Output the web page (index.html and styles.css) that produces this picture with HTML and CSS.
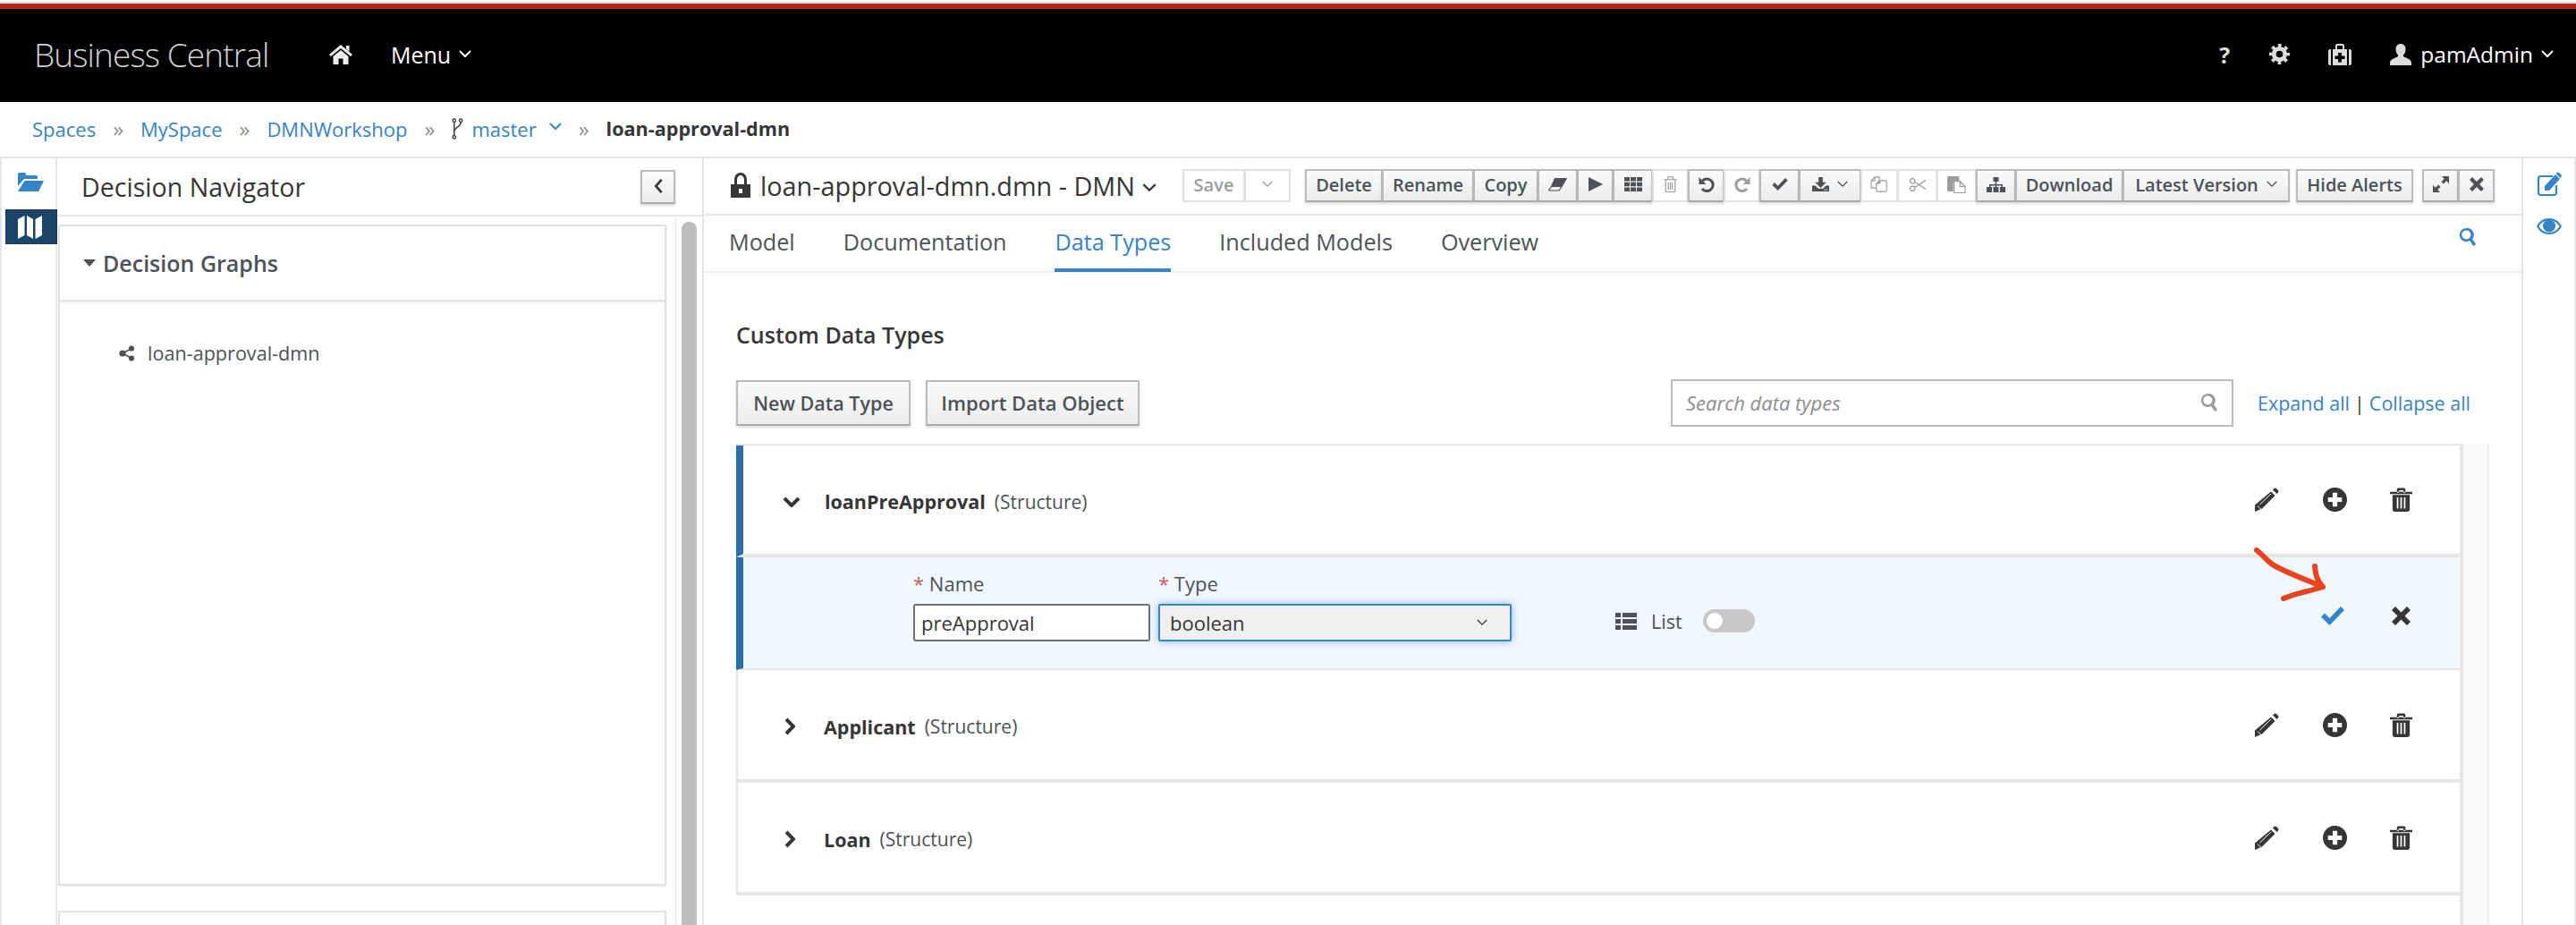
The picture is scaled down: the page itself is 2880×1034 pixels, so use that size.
FILE: index.html
```html
<!DOCTYPE html>
<html>
  <head>
    <title>Business Central</title>
    <link rel="stylesheet" href="styles.css">
  </head>
  <body>
    <svg class="sprites" width="0" height="0">
      <symbol id="i-home" viewBox="0 0 26 22"><path d="M13 0 26 11l-2 2L13 4 2 13l-2-2zM19 1h3.500v6.500L19 4.500zM4.500 13 13 6l8.500 7v9H15.500v-6.500h-5V22h-6z"/></symbol>
      <symbol id="i-gear" viewBox="0 0 24 24"><circle cx="12" cy="12" r="6.500" fill="none" stroke="currentColor" stroke-width="5"/><circle cx="12" cy="12" r="10" fill="none" stroke="currentColor" stroke-width="4" stroke-dasharray="3.900 3.950" stroke-dashoffset="2"/></symbol>
      <symbol id="i-medkit" viewBox="0 0 26 24"><path d="M8 6V2q0-2 2-2h6q2 0 2 2v4h-2V2h-6v4zM0 8q0-2 2-2h1v18H2q-2 0-2-2zM26 8q0-2-2-2h-1v18h1q2 0 2-2zM5 6h16v18H5zM11 10v3.500H7.500v3.500H11v3.500h4V17h3.500v-3.500H15V10z" fill-rule="evenodd"/></symbol>
      <symbol id="i-user" viewBox="0 0 24 24"><path d="M12 0c3.500 0 5.500 2.500 5.500 6 0 2.500-1 5-2.500 6.500v1.500c2.500 2 9 2.500 9 7.500V24H0v-2.500c0-5 6.500-5.500 9-7.500v-1.500C7.500 11 6.500 8.500 6.500 6c0-3.500 2-6 5.500-6z"/></symbol>
      <symbol id="i-folder" viewBox="0 0 29 21"><path d="M0 2q0-2 2-2h5q2 0 2 2v1h11q2 0 2 2v2H7L0 15zM7.500 9H29l-6 12H0z"/></symbol>
      <symbol id="i-map" viewBox="0 0 27 26"><path d="M0 4 7.500 0v22L0 26zM10 0l7 4v22l-7-4zM19.500 4 27 0v22l-7.500 4z"/></symbol>
      <symbol id="i-branch" viewBox="0 0 14 26"><g fill="none" stroke="currentColor" stroke-width="1.600"><circle cx="3" cy="3" r="1.800"/><circle cx="3" cy="23" r="1.800"/><circle cx="11" cy="3" r="1.800"/><path d="M3 5v16M11 5c0 7-8 5-8 12"/></g></symbol>
      <symbol id="i-share" viewBox="0 0 18 18"><circle cx="4" cy="9" r="3.600"/><circle cx="14" cy="3.500" r="3.100"/><circle cx="14" cy="14.500" r="3.100"/><path d="M4 9 14 3.500M4 9l10 5.500" stroke="currentColor" stroke-width="1.500"/></symbol>
      <symbol id="i-lock" viewBox="0 0 22 28"><path d="M4 13V8c0-5 3-8 7-8s7 3 7 8v5h-3V8c0-3-2-5-4-5S7 5 7 8v5zM0 13h22v15H0zM9 18v5h4v-5z" fill-rule="evenodd"/></symbol>
      <symbol id="i-eraser" viewBox="0 0 21 15"><path d="M7 0h13q1.200 0 .7 1L16 9H3z"/><path d="M3.500 9.500H15L12 14H1.500q-1 0-.6-1z" fill="none" stroke="currentColor" stroke-width="1.200"/></symbol>
      <symbol id="i-play" viewBox="0 0 16 16"><path d="M0 0 16 8 0 16z"/></symbol>
      <symbol id="i-grid" viewBox="0 0 20 16"><path d="M0 0h6v4.500H0zM7 0h6v4.500H7zM14 0h6v4.500h-6zM0 5.750h6v4.500H0zM7 5.750h6v4.500H7zM14 5.750h6v4.500h-6zM0 11.500h6V16H0zM7 11.500h6V16H7zM14 11.500h6V16h-6z"/></symbol>
      <symbol id="i-trash" viewBox="0 0 26 28"><path d="M0 5h26v2.500H0zM8 6V2.500Q8 .500 10 .500h6q2 0 2 2V6h-2.500V3h-5v3zM3 8.500h20v17q0 2.500-2.500 2.500h-15Q3 28 3 25.500zM8 11.500v13h1.800v-13zM12.100 11.500v13h1.800v-13zM16.200 11.500v13H18v-13z" fill-rule="evenodd"/></symbol>
      <symbol id="i-trash-o" viewBox="0 0 20 24"><g fill="none" stroke="currentColor" stroke-width="1.600"><path d="M0 5h20M6 5V2q0-1 1-1h6q1 0 1 1v3M3 5v17q0 1.500 1.500 1.500h11Q17 23.500 17 22V5M7 9v11M10 9v11M13 9v11"/></g></symbol>
      <symbol id="i-undo" viewBox="0 0 18 18"><path d="M4.500 5A6.800 6.800 0 1 1 4 14" fill="none" stroke="currentColor" stroke-width="3"/><path d="M.5 1v8h8z"/></symbol>
      <symbol id="i-check" viewBox="0 0 26 21"><path d="M0 11.500 4 7.500l5.500 5.500L22 0l4 4L9.500 21z"/></symbol>
      <symbol id="i-download" viewBox="0 0 24 20"><path d="M9 0h6v7h5l-8 8-8-8h5zM0 12h4.500l4 4h7l4-4H24v8H0z"/><path d="M17 17h1.500v1.500H17zM20 17h1.500v1.500H20z" fill="#f3f3f3"/></symbol>
      <symbol id="i-files" viewBox="0 0 24 22"><g fill="none" stroke="currentColor" stroke-width="1.400"><path d="M1 6l5-5h6v5l-4 4v6H1zM6 1v5H1M8 10l5-4h8q1 0 1 1v13q0 1-1 1H9q-1 0-1-1zM13 6v4H8"/></g></symbol>
      <symbol id="i-scissors" viewBox="0 0 24 18"><g fill="none" stroke="currentColor" stroke-width="1.500"><circle cx="5" cy="4" r="3.200"/><circle cx="5" cy="14" r="3.200"/><path d="M8 5.500 23 15M8 12.500 23 3"/></g></symbol>
      <symbol id="i-paste" viewBox="0 0 22 20"><path d="M0 2q0-2 2-2h10q2 0 2 2v4H9q-2 0-2 2v10H2q-2 0-2-2z"/><path d="M8 6h7l6 6v7.500H8zM15 6v6h6" fill="#fff" stroke="currentColor" stroke-width="1.300"/></symbol>
      <symbol id="i-sitemap" viewBox="0 0 21 17"><path d="M7.500 0h6v5h-6zM9.750 5h1.500v3H18v3h-1.500V9.500h-5.250V11h-1.500V9.500H4.500V11H3V8h6.750zM0 11h6v6H0zM7.500 11h6v6h-6zM15 11h6v6h-6z"/></symbol>
      <symbol id="i-expand" viewBox="0 0 22 22"><path d="M12 0h10v10l-3.500-3.500-4 4-3-3 4-4zM10 22H0V12l3.500 3.500 4-4 3 3-4 4z"/></symbol>
      <symbol id="i-times" viewBox="0 0 21 21"><path d="M4 0l6.500 6.500L17 0l4 4-6.500 6.500L21 17l-4 4-6.500-6.500L4 21l-4-4 6.500-6.500L0 4z"/></symbol>
      <symbol id="i-search" viewBox="0 0 22 24"><path d="M9 0a9 9 0 1 0 4.500 16.800L18.500 24l3.500-2.500-5-6.800A9 9 0 0 0 9 0zm0 3a6 6 0 1 1 0 12A6 6 0 0 1 9 3z"/></symbol>
      <symbol id="i-edit" viewBox="0 0 28 28"><path d="M22 15v8q0 3-3 3H5q-3 0-3-3V8q0-3 3-3h13" fill="none" stroke="currentColor" stroke-width="2.200"/><path d="M21 3l5 5-12 13H9v-5zM23 1q1-1 2 0l2.500 2.500q1 1 0 2L26.500 7l-5-5z"/></symbol>
      <symbol id="i-eye" viewBox="0 0 28 18"><path d="M14 0C8 0 3 3 0 9c3 6 8 9 14 9s11-3 14-9c-3-6-8-9-14-9zm0 2c5 0 9 3 11.500 7C23 13 19 16 14 16S5 13 2.500 9C5 5 9 2 14 2z"/><circle cx="14" cy="8.500" r="7"/></symbol>
      <symbol id="i-plus" viewBox="0 0 26 26"><path fill-rule="evenodd" d="M13 0a13 13 0 1 0 0 26 13 13 0 0 0 0-26zM10.500 5.500h5v5h5v5h-5v5h-5v-5h-5v-5h5z"/></symbol>
      <symbol id="i-pencil" viewBox="0 0 27 27"><path d="M18 4.500l4.500 4.500L8 23.500 0 27v-7.500zM20 2.500l1.500-1.500q1.200-1 2.500 0l2 2q1 1.300 0 2.500L24.500 7z"/><path d="M5.500 19 18 7M3 20.500l3.500 3.500" stroke="#fff" stroke-width="1" fill="none"/></symbol>
      <symbol id="i-list" viewBox="0 0 24 19"><path d="M0 .5q0-.5.5-.5H6v5H0zM8 0h16v5H8zM0 7h6v5H0zM8 7h16v5H8zM0 14h6v5H.5q-.5 0-.5-.5zM8 14h16v5H8z"/></symbol>
    </svg>

    <div class="topline"></div>
    <nav class="navbar">
      <span class="brand">Business Central</span>
      <svg class="ico home"><use href="#i-home"/></svg>
      <a class="nav-menu">Menu <svg class="caret" viewBox="0 0 14 9"><path d="M1 1l6 6 6-6"/></svg></a>
      <div class="nav-right">
        <span class="help">?</span>
        <svg class="ico gear"><use href="#i-gear"/></svg>
        <svg class="ico medkit"><use href="#i-medkit"/></svg>
        <svg class="ico user"><use href="#i-user"/></svg>
        <a class="nav-user">pamAdmin <svg class="caret" viewBox="0 0 14 9"><path d="M1 1l6 6 6-6"/></svg></a>
      </div>
    </nav>

    <div class="crumbs">
      <a>Spaces</a><span class="sep">»</span>
      <a>MySpace</a><span class="sep">»</span>
      <a>DMNWorkshop</a><span class="sep">»</span>
      <svg class="ico branch"><use href="#i-branch"/></svg>
      <a>master</a>
      <svg class="caret blue" viewBox="0 0 14 9"><path d="M1 1l6 6 6-6"/></svg>
      <span class="sep">»</span>
      <b>loan-approval-dmn</b>
    </div>

    <div class="workspace">
      <aside class="rail">
        <svg class="ico folder"><use href="#i-folder"/></svg>
        <div class="rail-active"><svg class="ico map"><use href="#i-map"/></svg></div>
      </aside>

      <section class="navigator">
        <header class="nav-head">
          <h2>Decision Navigator</h2>
          <button class="btn collapse"><svg viewBox="0 0 12 20"><path d="M10 2 3 10l7 8"/></svg></button>
        </header>
        <div class="nav-scroll">
          <div class="nav-cards">
            <div class="card graphs">
              <div class="card-head"><i class="tri"></i>Decision Graphs</div>
              <div class="graph-item"><svg class="ico share"><use href="#i-share"/></svg>loan-approval-dmn</div>
            </div>
            <div class="card second"></div>
          </div>
          <div class="scroll-track"><div class="scroll-thumb"></div></div>
        </div>
      </section>

      <main class="editor">
        <div class="toolbar">
          <svg class="ico lock"><use href="#i-lock"/></svg>
          <span class="title">loan-approval-dmn.dmn - DMN</span>
          <svg class="caret dark" viewBox="0 0 14 9"><path d="M1 1l6 6 6-6"/></svg>

          <div class="group off save-group">
            <button class="btn w70">Save</button>
            <button class="btn w52"><svg class="caret small" viewBox="0 0 14 9"><path d="M1 1l6 6 6-6"/></svg></button>
          </div>
          <div class="group main-group">
            <button class="btn w86">Delete</button>
            <button class="btn w102">Rename</button>
            <button class="btn w72">Copy</button>
            <button class="btn w44"><svg class="t-eraser"><use href="#i-eraser"/></svg></button>
            <button class="btn w40"><svg class="t-play"><use href="#i-play"/></svg></button>
            <button class="btn w44"><svg class="t-grid"><use href="#i-grid"/></svg></button>
            <button class="btn w40 off"><svg class="t-trash"><use href="#i-trash-o"/></svg></button>
            <button class="btn w40"><svg class="t-undo"><use href="#i-undo"/></svg></button>
            <button class="btn w40 off"><svg class="t-undo flip"><use href="#i-undo"/></svg></button>
            <button class="btn w44"><svg class="t-check"><use href="#i-check"/></svg></button>
            <button class="btn w70"><svg class="t-download"><use href="#i-download"/></svg><svg class="caret small" viewBox="0 0 14 9"><path d="M1 1l6 6 6-6"/></svg></button>
            <button class="btn w42 off"><svg class="t-files"><use href="#i-files"/></svg></button>
            <button class="btn w44 off"><svg class="t-scissors"><use href="#i-scissors"/></svg></button>
            <button class="btn w44 off"><svg class="t-paste"><use href="#i-paste"/></svg></button>
            <button class="btn w44"><svg class="t-sitemap"><use href="#i-sitemap"/></svg></button>
            <button class="btn w120">Download</button>
            <button class="btn w186">Latest Version <svg class="caret small" viewBox="0 0 14 9"><path d="M1 1l6 6 6-6"/></svg></button>
          </div>
          <div class="group alerts-group">
            <button class="btn w131">Hide Alerts</button>
          </div>
          <div class="group win-group">
            <button class="btn w40"><svg class="t-expand"><use href="#i-expand"/></svg></button>
            <button class="btn w40"><svg class="t-times"><use href="#i-times"/></svg></button>
          </div>
        </div>

        <div class="tabs">
          <a>Model</a>
          <a>Documentation</a>
          <a class="active">Data Types</a>
          <a>Included Models</a>
          <a>Overview</a>
          <svg class="ico tab-search"><use href="#i-search"/></svg>
        </div>

        <div class="content">
          <h3>Custom Data Types</h3>
          <div class="actions">
            <button class="btn big new-type">New Data Type</button>
            <button class="btn big import">Import Data Object</button>
            <div class="search">
              <span>Search data types</span>
              <svg class="ico"><use href="#i-search"/></svg>
            </div>
            <div class="links"><a>Expand all</a><span>|</span><a>Collapse all</a></div>
          </div>

          <div class="list-wrap">
            <div class="list">
              <div class="row first open">
                <svg class="chev down" viewBox="0 0 20 12"><path d="M2 2l8 8 8-8"/></svg>
                <b>loanPreApproval</b><span class="kind">(Structure)</span>
                <div class="row-icons">
                  <svg class="pencil"><use href="#i-pencil"/></svg>
                  <svg class="plus"><use href="#i-plus"/></svg>
                  <svg class="trash"><use href="#i-trash"/></svg>
                </div>
              </div>
              <div class="row edit">
                <div class="field name">
                  <label><em>*</em> Name</label>
                  <div class="input">preApproval</div>
                </div>
                <div class="field type">
                  <label><em>*</em> Type</label>
                  <div class="select">boolean <svg class="caret small" viewBox="0 0 14 9"><path d="M1 1l6 6 6-6"/></svg></div>
                </div>
                <svg class="list-ico"><use href="#i-list"/></svg>
                <span class="list-label">List</span>
                <span class="toggle"><i></i></span>
                <div class="row-icons edit-icons">
                  <svg class="confirm"><use href="#i-check"/></svg>
                  <svg class="cancel"><use href="#i-times"/></svg>
                </div>
              </div>
              <div class="row">
                <svg class="chev right" viewBox="0 0 12 20"><path d="M2 2l8 8-8 8"/></svg>
                <b>Applicant</b><span class="kind">(Structure)</span>
                <div class="row-icons">
                  <svg class="pencil"><use href="#i-pencil"/></svg>
                  <svg class="plus"><use href="#i-plus"/></svg>
                  <svg class="trash"><use href="#i-trash"/></svg>
                </div>
              </div>
              <div class="row">
                <svg class="chev right" viewBox="0 0 12 20"><path d="M2 2l8 8-8 8"/></svg>
                <b>Loan</b><span class="kind">(Structure)</span>
                <div class="row-icons">
                  <svg class="pencil"><use href="#i-pencil"/></svg>
                  <svg class="plus"><use href="#i-plus"/></svg>
                  <svg class="trash"><use href="#i-trash"/></svg>
                </div>
              </div>
            </div>
          </div>
        </div>
      </main>

      <aside class="rail-right">
        <svg class="ico edit-ico"><use href="#i-edit"/></svg>
        <svg class="ico eye-ico"><use href="#i-eye"/></svg>
      </aside>
    </div>

    <!-- red arrow drawn on top of the screenshot -->
    <svg class="annotation" viewBox="0 0 90 70">
      <path d="M3 3C12 10 16 17 24 21 41 30 58 36 77 44M68 21C69 30 70 37 77 44 62 49 47 51 33 57" fill="none" stroke="#e8431f" stroke-width="6" stroke-linecap="round" stroke-linejoin="round"/>
    </svg>
  </body>
</html>
```

FILE: styles.css
```css
* {
  box-sizing: border-box;
}
html, body {
  height: 100%;
}
body {
  margin: 0;
  position: relative;
  overflow: hidden;
  font-family: "Open Sans", sans-serif;
  font-size: 22px;
  color: #363636;
  background: #fff;
}
a {
  color: #3683c6;
}
svg {
  fill: currentColor;
}
.sprites {
  position: absolute;
}
.caret {
  width: 14px;
  height: 9px;
  fill: none;
  stroke: currentColor;
  stroke-width: 2;
}
.caret.small {
  width: 12px;
  height: 8px;
  stroke-width: 1.600;
}
.caret.blue {
  color: #3683c6;
  margin: -4px 0 0 14px;
}
.caret.dark {
  margin: 6px 0 0 8px;
  width: 16px;
  height: 10px;
  stroke-width: 2;
}

/* top bar */
.topline {
  height: 10px;
  border-top: 2px solid #fff;
  background: linear-gradient(#dcdcdc 2px, #b72418 2px);
}
.navbar {
  height: 104px;
  background: #000;
  color: #fff;
  display: flex;
  align-items: center;
  padding: 0 25px 3px 38px;
}
.brand {
  font-size: 37px;
  font-weight: 300;
  color: #d1d1d1;
  letter-spacing: -0.900px;
  width: 330px;
}
.home {
  width: 26px;
  height: 22px;
  color: #eee;
}
.nav-menu {
  color: #fff;
  font-size: 25px;
  margin-left: 43px;
  display: flex;
  align-items: center;
  gap: 9px;
}
.nav-right {
  margin-left: auto;
  display: flex;
  align-items: center;
}
.help {
  font-weight: 700;
  font-size: 25px;
  color: #dcdcdc;
  width: 13px;
}
.gear {
  width: 23px;
  height: 23px;
  margin-left: 43px;
  color: #dcdcdc;
}
.medkit {
  width: 26px;
  height: 24px;
  margin-left: 43px;
  color: #dcdcdc;
}
.user {
  width: 24px;
  height: 24px;
  margin-left: 43px;
  color: #dcdcdc;
}
.nav-user {
  color: #fff;
  font-size: 24.500px;
  margin-left: 10px;
  display: flex;
  align-items: center;
  gap: 9px;
}

/* breadcrumb */
.crumbs {
  height: 63px;
  border-bottom: 2px solid #e2e2e2;
  display: flex;
  align-items: center;
  padding: 0 0 2px 36px;
  font-size: 22px;
}
.crumbs .sep {
  color: #8b8d8f;
  font-size: 24px;
  margin: 0 19px;
}
.crumbs b {
  font-weight: 700;
  font-size: 21.600px;
  color: #363636;
}
.branch {
  width: 13px;
  height: 26px;
  margin: 0 9px 0 0;
  color: #444;
}

/* layout */
.workspace {
  display: flex;
  height: 857px;
}
.rail {
  width: 64px;
  flex: none;
  border-left: 2px solid #e6e6e6;
  border-right: 2px solid #e6e6e6;
  padding-top: 16px;
  color: #3683c6;
}
.folder {
  display: block;
  width: 29px;
  height: 21px;
  margin-left: 18px;
}
.rail-active {
  width: 58px;
  height: 39px;
  margin: 20px 0 0 4px;
  background: #1a4569;
  border: 1px solid #13385a;
  display: flex;
  align-items: center;
  justify-content: center;
  padding-right: 3px;
  color: #fff;
}
.map {
  width: 27px;
  height: 26px;
}

/* left panel */
.navigator {
  width: 721px;
  flex: none;
  display: flex;
  flex-direction: column;
}
.nav-head {
  height: 65px;
  flex: none;
  border-bottom: 2px solid #e6e6e6;
  display: flex;
  align-items: center;
  justify-content: space-between;
  padding: 0 30px 0 27px;
}
.nav-head h2 {
  margin: 0;
  font-size: 28.600px;
  font-weight: 400;
  color: #363636;
}
.collapse {
  width: 39px;
  height: 38px;
  padding: 0;
  display: flex;
  align-items: center;
  justify-content: center;
}
.collapse svg {
  width: 12px;
  height: 18px;
  fill: none;
  stroke: #363636;
  stroke-width: 3;
}
.nav-scroll {
  flex: 1;
  display: flex;
  min-height: 0;
}
.nav-cards {
  width: 680px;
  margin-left: 1px;
  padding-top: 9px;
}
.card {
  border: 2px solid #e2e2e2;
  background: #fff;
  box-shadow: 0 1px 2px rgba(0, 0, 0, 0.1);
}
.graphs {
  height: 739px;
}
.second {
  height: 40px;
  margin-top: 28px;
}
.card-head {
  height: 84px;
  border-bottom: 2px solid #e2e2e2;
  box-shadow: 0 2px 2px rgba(0, 0, 0, 0.06);
  display: flex;
  align-items: center;
  padding-left: 26px;
  font-size: 25px;
  font-weight: 600;
  color: #4d5258;
}
.tri {
  width: 0;
  height: 0;
  border: 7px solid transparent;
  border-top: 8px solid #4d5258;
  border-bottom: 0;
  margin-right: 8px;
}
.graph-item {
  display: flex;
  align-items: center;
  margin: 43px 0 0 66px;
  font-size: 21.600px;
  color: #4d5258;
}
.share {
  width: 18px;
  height: 18px;
  margin-right: 14px;
  color: #4d5258;
}
.scroll-track {
  width: 30px;
  margin-left: 10px;
  border-left: 1px solid #e8e8e8;
  padding: 6px 6px 0 6px;
}
.scroll-thumb {
  height: 100%;
  background: #bdbdbd;
  border-radius: 8px 8px 0 0;
}

/* editor */
.editor {
  width: 2034px;
  flex: none;
  border-left: 2px solid #e6e6e6;
  display: flex;
  flex-direction: column;
}
.toolbar {
  height: 64px;
  flex: none;
  border-bottom: 2px solid #e6e6e6;
  display: flex;
  align-items: center;
  padding: 0 30px 2px 30px;
}
.lock {
  width: 22px;
  height: 28px;
  color: #363636;
}
.title {
  font-size: 28.800px;
  margin-left: 11px;
  color: #363636;
}
.group {
  display: flex;
  height: 37px;
}
.save-group {
  margin-left: auto;
}
.main-group {
  margin-left: 16px;
}
.alerts-group {
  margin-left: 7px;
}
.win-group {
  margin-left: 10px;
}
.btn {
  font-family: inherit;
  font-size: 20px;
  font-weight: 600;
  color: #4d5258;
  background: linear-gradient(#fafafa, #ececec);
  border: 2px solid #bbb;
  border-bottom-color: #aaa;
  box-shadow: 0 2px 3px rgba(0, 0, 0, 0.14);
  padding: 0 0 2px;
  display: flex;
  align-items: center;
  justify-content: center;
  gap: 9px;
}
.group .btn + .btn {
  margin-left: -1px;
}
.btn.off, .off .btn {
  background: #fff;
  border-color: #e2e2e2;
  box-shadow: none;
  color: #9c9c9c;
}
.w40 { width: 41px; }
.w42 { width: 42px; }
.w44 { width: 45px; }
.w52 { width: 52px; }
.w70 { width: 70px; }
.w72 { width: 73px; }
.w86 { width: 87px; }
.w102 { width: 103px; }
.w120 { width: 121px; }
.w131 { width: 131px; }
.w186 { width: 187px; }
.t-eraser { width: 21px; height: 15px; }
.t-play { width: 16px; height: 16px; }
.t-grid { width: 20px; height: 16px; }
.t-trash { width: 15px; height: 18px; }
.t-undo { width: 18px; height: 18px; }
.t-check { width: 18px; height: 14px; }
.t-download { width: 19px; height: 16px; }
.t-files { width: 20px; height: 18px; }
.t-scissors { width: 20px; height: 15px; }
.t-paste { width: 21px; height: 19px; }
.t-sitemap { width: 21px; height: 17px; }
.t-expand { width: 18px; height: 18px; }
.t-times { width: 16px; height: 16px; }
.flip {
  transform: scaleX(-1);
}

/* tabs */
.tabs {
  height: 64px;
  flex: none;
  border-bottom: 2px solid #ededed;
  display: flex;
  align-items: stretch;
  gap: 54px;
  padding-left: 28px;
}
.tabs a {
  font-size: 25.200px;
  color: #4d5258;
  display: flex;
  align-items: center;
  height: 63px;
  padding-bottom: 6px;
}
.tabs a.active {
  color: #3683c6;
  border-bottom: 4px solid #3683c6;
  padding-bottom: 2px;
}
.tab-search {
  width: 20px;
  height: 20px;
  color: #3683c6;
  margin: 14px 0 0 auto;
  position: relative;
  right: 50px;
}

/* data types */
.content {
  flex: 1;
  padding-left: 36px;
  min-height: 0;
}
.content h3 {
  margin: 0;
  padding-top: 54px;
  font-size: 25px;
  line-height: 30px;
  font-weight: 600;
  color: #363636;
}
.actions {
  display: flex;
  align-items: center;
  margin-top: 35px;
  height: 52px;
}
.btn.big {
  height: 51px;
  padding: 0;
  font-size: 21.500px;
  font-weight: 600;
  margin-right: 17px;
}
.new-type {
  width: 195px;
}
.btn.import {
  width: 239px;
  font-size: 22px;
}
.search {
  margin-left: auto;
  width: 629px;
  height: 53px;
  border: 2px solid #bbb;
  display: flex;
  align-items: center;
  justify-content: space-between;
  padding: 0 15px;
  font-size: 22px;
  font-style: italic;
  color: #8b8d8f;
}
.search svg {
  width: 20px;
  height: 20px;
  color: #9c9c9c;
}
.links {
  width: 265px;
  display: flex;
  justify-content: flex-end;
  gap: 5px;
  font-size: 21.500px;
  margin-right: 57px;
}
.list-wrap {
  margin-top: 20px;
  width: 1960px;
  height: 540px;
  background: #f9f9f9;
  border-right: 2px solid #ececec;
}
.list {
  width: 1931px;
  height: 100%;
  background: #fff;
  border-right: 4px solid #e6e6e6;
  border-top: 2px solid #e6e6e6;
}
.row {
  height: 126px;
  border-left: 2px solid #e6e6e6;
  border-bottom: 4px solid #e6e6e6;
  display: flex;
  align-items: center;
  padding: 4px 53px 0 52px;
  font-size: 21.500px;
}
.row b {
  font-weight: 700;
  color: #363636;
}
.row .kind {
  margin-left: 10px;
  color: #4d5258;
  font-size: 21px;
}
.row.open {
  border-left: 8px solid #2a6eab;
  padding-left: 44px;
}
.row.first {
  height: 125px;
}
.row.edit {
  height: 126px;
  border-left: 8px solid #2a6eab;
  background: #f0f7fd;
  border-bottom-width: 2px;
  padding: 0 55px 0 190px;
}
.chev {
  fill: none;
  stroke: #363636;
  stroke-width: 4;
  flex: none;
}
.chev.down {
  width: 20px;
  height: 12px;
  margin-right: 27px;
}
.chev.right {
  width: 12px;
  height: 20px;
  margin: 0 32px 0 0;
}
.row-icons {
  margin-left: auto;
  display: flex;
  align-items: center;
  color: #363636;
}
.row-icons svg {
  margin-top: -4px;
}
.pencil {
  width: 27px;
  height: 27px;
}
.plus {
  width: 27px;
  height: 27px;
  margin-left: 49px;
}
.trash {
  width: 25px;
  height: 27px;
  margin-left: 48px;
}
.confirm {
  width: 26px;
  height: 21px;
  color: #3683c6;
}
.cancel {
  width: 21px;
  height: 21px;
  margin-left: 53px;
}
.field {
  display: flex;
  flex-direction: column;
  margin-top: -16px;
}
.field label {
  font-size: 22px;
  line-height: 30px;
  margin-bottom: 8px;
  color: #4d5258;
}
.field em {
  font-style: normal;
  color: #c0595a;
}
.name {
  width: 265px;
}
.input {
  height: 42px;
  border: 2px solid #6f6f6f;
  border-radius: 3px;
  background: #fff;
  padding: 0 7px;
  display: flex;
  align-items: center;
  font-size: 22px;
  color: #363636;
}
.type {
  width: 395px;
  margin-left: 9px;
}
.select {
  height: 42px;
  border: 2px solid #3683c6;
  border-radius: 2px;
  background: #f0f0f0;
  box-shadow: 0 0 8px rgba(54, 131, 198, 0.55);
  padding: 0 25px 0 11px;
  display: flex;
  align-items: center;
  justify-content: space-between;
  font-size: 22px;
  color: #363636;
}
.list-ico {
  width: 24px;
  height: 19px;
  margin: 18px 0 0 116px;
  color: #4d5258;
}
.list-label {
  margin: 18px 0 0 16px;
  color: #4d5258;
}
.toggle {
  width: 58px;
  height: 26px;
  margin: 18px 0 0 23px;
  border-radius: 13px;
  background: #c8c8c8;
  padding: 4px;
}
.toggle i {
  display: block;
  width: 18px;
  height: 18px;
  border-radius: 50%;
  background: #fff;
}
.edit-icons svg {
  margin-top: 6px;
}

/* right rail */
.rail-right {
  flex: 1;
  border-left: 2px solid #e6e6e6;
  border-right: 2px solid #e6e6e6;
  display: flex;
  flex-direction: column;
  align-items: center;
  color: #3683c6;
  padding-top: 15px;
}
.edit-ico {
  width: 28px;
  height: 28px;
}
.eye-ico {
  width: 28px;
  height: 18px;
  margin-top: 24px;
}

.annotation {
  position: absolute;
  left: 2520px;
  top: 612px;
  width: 90px;
  height: 70px;
}
```
